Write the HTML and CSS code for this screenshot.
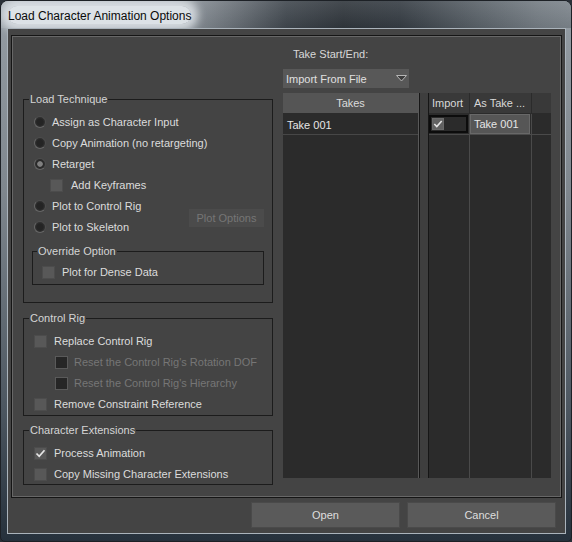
FILE: index.html
```html
<!DOCTYPE html>
<html>
<head>
<meta charset="utf-8">
<link rel="stylesheet" href="styles.css">
</head>
<body>
<div class="window">
  <div class="titlebar"><span class="title">Load Character Animation Options</span></div>
  <div class="client">
    <div class="panel">
      <div class="left">
        <fieldset class="group">
          <legend>Load Technique</legend>
          <div class="row"><span class="radio"></span>Assign as Character Input</div>
          <div class="row"><span class="radio"></span>Copy Animation (no retargeting)</div>
          <div class="row"><span class="radio on"></span>Retarget</div>
          <div class="row sub-kf"><span class="check"></span>Add Keyframes</div>
          <div class="plot-block">
            <div class="plot-rows">
              <div class="row"><span class="radio"></span>Plot to Control Rig</div>
              <div class="row"><span class="radio"></span>Plot to Skeleton</div>
            </div>
            <div class="btn-plot">Plot Options</div>
          </div>
          <fieldset class="group override">
            <legend>Override Option</legend>
            <div class="row"><span class="check"></span>Plot for Dense Data</div>
          </fieldset>
        </fieldset>

        <fieldset class="group cr">
          <legend>Control Rig</legend>
          <div class="row"><span class="check"></span>Replace Control Rig</div>
          <div class="row sub disabled"><span class="check dark"></span>Reset the Control Rig's Rotation DOF</div>
          <div class="row sub disabled"><span class="check dark"></span>Reset the Control Rig's Hierarchy</div>
          <div class="row"><span class="check"></span>Remove Constraint Reference</div>
        </fieldset>

        <fieldset class="group ce">
          <legend>Character Extensions</legend>
          <div class="row"><span class="check"><svg viewBox="0 0 13 13" width="13" height="13"><path d="M2.5 6.5 L5.2 9.3 L10.5 3.2" fill="none" stroke="#e6e6e6" stroke-width="1.7"/></svg></span>Process Animation</div>
          <div class="row"><span class="check"></span>Copy Missing Character Extensions</div>
        </fieldset>
      </div>

      <div class="right">
        <div class="take-label">Take Start/End:</div>
        <div class="dropdown">
          <span>Import From File</span>
          <svg class="arrow" viewBox="0 0 11 7" width="11" height="7"><polygon points="0.5,0.5 10.5,0.5 5.5,6" fill="#3c3c3c" stroke="#b5b5b5" stroke-width="1"/></svg>
        </div>
        <div class="tables">
          <div class="takes">
            <div class="takes-head">Takes</div>
            <div class="takes-row">Take 001</div>
          </div>
          <div class="splitter"></div>
          <div class="grid">
            <div class="col c1">
              <div class="hcell">Import</div>
              <div class="bcell"><span class="imp-box"><span class="check small"><svg viewBox="0 0 13 13" width="12" height="12"><path d="M2.5 6.5 L5.2 9.3 L10.5 3.2" fill="none" stroke="#e6e6e6" stroke-width="1.7"/></svg></span></span></div>
              <div class="fill"></div>
            </div>
            <div class="col c2">
              <div class="hcell">As Take ...</div>
              <div class="bcell"><span class="take-cell">Take 001</span></div>
              <div class="fill"></div>
            </div>
            <div class="col c3">
              <div class="hcell"></div>
              <div class="bcell"></div>
              <div class="fill"></div>
            </div>
          </div>
        </div>
      </div>
    </div>
    <div class="buttons">
      <div class="btn">Open</div>
      <div class="btn">Cancel</div>
    </div>
  </div>
</div>
</body>
</html>
```

FILE: styles.css
```css
* { box-sizing: border-box; }
html, body { margin: 0; padding: 0; }
body {
  width: 572px;
  height: 542px;
  background: #2a3038;
  font-family: "Liberation Sans", Arial, sans-serif;
  font-size: 11px;
  color: #dcdcdc;
  overflow: hidden;
}
.window {
  width: 572px;
  height: 542px;
  border: 1px solid #1d2126;
  border-radius: 8px 8px 5px 5px;
  background: linear-gradient(180deg, #959da4 0%, #7f878e 35%, #4d5761 75%, #26313c 100%);
  display: flex;
  flex-direction: column;
  overflow: hidden;
}
.titlebar {
  height: 27px;
  flex: none;
  padding-left: 7px;
  display: flex;
  align-items: center;
  background:
    linear-gradient(180deg, rgba(255,255,255,0.10), rgba(0,0,0,0.05)),
    linear-gradient(90deg, #a4acb3 0%, #969ea5 30%, #6d747b 40%, #40474e 50%, #30363c 60%, #353c43 70%, #5a6269 84%, #737b82 94%, #7c848b 100%);
}
.title {
  font-size: 12px;
  color: #0a0a0a;
  line-height: 16px;
  padding-top: 2px;
  background: rgba(226,231,235,0.92);
  border-radius: 9px;
  box-shadow: 0 0 9px 7px rgba(226,231,235,0.82);
}
.client {
  flex: none;
  height: 506px;
  margin: 0 5px 0 6px;
  border: 1px solid #aab3bb;
  background: #444444;
  display: flex;
  flex-direction: column;
}
.panel {
  margin: 6px 3px 0 3px;
  height: 463px;
  border: 1px solid #151515;
  box-shadow: inset 0 0 0 1px #676767;
  display: flex;
  padding: 0 10px 0 11px;
}
.left {
  width: 250px;
  padding-top: 56px;
  flex: none;
}
fieldset.group {
  margin: 0;
  padding: 0 0 17px 0;
  border: 1px solid #1c1c1c;
  min-inline-size: 0;
}
fieldset.group legend {
  margin-left: 5px;
  padding: 0 1px;
  line-height: 14px;
  font-size: 11px;
  color: #d4d4d4;
}
.group > .row:first-of-type { margin-top: 5px; }
.row {
  height: 21px;
  display: flex;
  align-items: center;
  padding-left: 11px;
  white-space: nowrap;
  padding-top: 1px;
}
.radio {
  width: 12px;
  height: 12px;
  border-radius: 50%;
  flex: none;
  margin-right: 6px;
  margin-left: -1px;
  background: radial-gradient(circle at 50% 50%, #242424 0 3.2px, #2e2e2e 4.2px);
  border: 1px solid #666666;
  border-top-color: #4c4c4c;
  border-right-color: #4c4c4c;
}
.radio.on {
  background: radial-gradient(circle at 50% 50%, #808080 0 2.4px, #262626 3.2px, #2e2e2e 4.2px);
}
.check {
  width: 13px;
  height: 13px;
  flex: none;
  margin-right: 7px;
  background: #585858;
  border: 1px solid #4c4c4c;
  position: relative;
}
.check svg { position: absolute; left: -1px; top: -1px; }
.check.dark {
  background: #262626;
  border-color: #5a5a5a;
}
.sub-kf { padding-left: 26px; }
.sub-kf .check { margin-right: 8px; }
.plot-block {
  display: flex;
  align-items: center;
}
.btn-plot {
  margin-left: auto;
  margin-right: 8px;
  margin-top: 3px;
  width: 75px;
  height: 18px;
  line-height: 19px;
  text-align: center;
  background: #4b4b4b;
  color: #767676;
}
fieldset.override {
  margin: 7px 8px 0 8px;
  padding: 0 0 2px 0;
}
fieldset.override legend { margin-left: 4px; }
.override > .row:first-of-type { margin-top: 3px; padding-left: 9px; }
fieldset.cr {
  margin-top: 8px;
  padding-bottom: 1px;
}
.cr .row, .ce .row { padding-left: 10px; }
.cr .row.sub { padding-left: 31px; }
.cr .row.sub .check { margin-right: 6px; }
.disabled { color: #767676; }
fieldset.ce {
  margin-top: 7px;
  padding-bottom: 0;
}

.right {
  margin-left: 10px;
  width: 268px;
  flex: none;
  padding-top: 11px;
  display: flex;
  flex-direction: column;
}
.take-label {
  line-height: 15px;
  padding-left: 10px;
  color: #d8d8d8;
  height: 14px;
}
.dropdown {
  margin-top: 8px;
  width: 126px;
  height: 19px;
  background: #585858;
  display: flex;
  align-items: center;
  padding-left: 3px;
  padding-right: 2px;
  padding-top: 1px;
  color: #e0e0e0;
}
.dropdown .arrow { margin-left: auto; margin-top: -1px; }
.tables {
  margin-top: 5px;
  height: 385px;
  display: flex;
}
.takes {
  width: 136px;
  flex: none;
  background: #2b2b2b;
  border-right: 1px solid #595959;
}
.takes-head {
  height: 21px;
  line-height: 21px;
  text-align: center;
  background: #555555;
  border-bottom: 1px solid #2b2b2b;
  color: #dcdcdc;
}
.takes-row {
  height: 21px;
  line-height: 22px;
  padding-left: 4px;
  border-bottom: 1px solid #474747;
  color: #e6e6e6;
}
.splitter {
  width: 10px;
  flex: none;
  background: #3e3e3e;
  border-left: 1px solid #161616;
  border-right: 1px solid #161616;
}
.grid {
  width: 122px;
  flex: none;
  display: flex;
  background: #2b2b2b;
}
.col {
  display: flex;
  flex-direction: column;
}
.c1 { width: 41px; }
.c2 { width: 62px; }
.c3 { width: 19px; }
.hcell {
  height: 21px;
  line-height: 21px;
  background: #393939;
  border-right: 1px solid #2b2b2b;
  border-bottom: 1px solid #2b2b2b;
  padding-left: 3px;
  white-space: nowrap;
  overflow: hidden;
  color: #d8d8d8;
}
.c2 .hcell { padding-left: 4px; }
.c3 .hcell { border-right: none; }
.bcell {
  height: 21px;
  border-right: 1px solid #4a4a4a;
  border-bottom: 1px solid #4a4a4a;
  display: flex;
  align-items: center;
}
.fill {
  flex: 1;
  border-right: 1px solid #4a4a4a;
}
.c3 .bcell, .c3 .fill { border-right: none; }
.imp-box {
  width: 39px;
  height: 18px;
  border: 2px solid #0c0c0c;
  background: #2b2b2b;
  display: flex;
  align-items: center;
  padding-left: 1px;
}
.check.small {
  width: 12px;
  height: 12px;
  background: #626262;
  border-color: #6a6a6a;
}
.take-cell {
  width: 60px;
  height: 20px;
  margin-left: 0;
  background: #565656;
  border: 1px solid #686868;
  line-height: 19px;
  padding-left: 3px;
  color: #e6e6e6;
}
.buttons {
  margin-top: 4px;
  display: flex;
  justify-content: flex-end;
  gap: 7px;
  padding-right: 9px;
}
.btn {
  width: 149px;
  height: 26px;
  line-height: 25px;
  text-align: center;
  background: #5a5a5a;
  border: 1px solid #4a4a4a;
  color: #dedede;
}
```
